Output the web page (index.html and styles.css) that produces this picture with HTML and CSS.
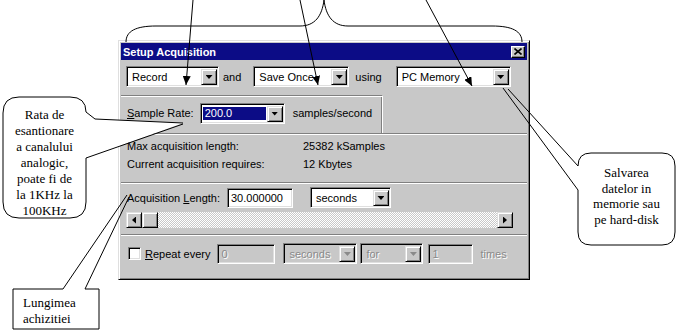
FILE: index.html
```html
<!DOCTYPE html>
<html lang="ro">
<head>
  <meta charset="UTF-8" />
  <title>Setup Acquisition</title>
  <link rel="stylesheet" href="styles.css">
</head>
<body>

  <div class="canvas">
    <div class="dialog">
      <div class="titlebar">
        <span class="title">Setup Acquisition</span>
        <span class="close-btn">
          <svg width="8" height="7" viewBox="0 0 8 7"><path d="M0.5 0.5 L7.5 6.5 M7.5 0.5 L0.5 6.5" stroke="#000" stroke-width="1.6" /></svg>
        </span>
      </div>

      <div class="mode-row">
        <div class="combo combo-record"><span class="combo-value">Record</span><span class="combo-btn"></span></div>
        <span class="word-and">and</span>
        <div class="combo combo-save"><span class="combo-value">Save Once</span><span class="combo-btn"></span></div>
        <span class="word-using">using</span>
        <div class="combo combo-memory"><span class="combo-value">PC Memory</span><span class="combo-btn"></span></div>
      </div>

      <div class="rate-group">
        <span class="rate-label"><u>S</u>ample Rate:</span>
        <div class="combo combo-rate"><span class="combo-value selected">200.0</span><span class="combo-btn"></span></div>
        <span class="rate-unit">samples/second</span>
      </div>
      <div class="sep"></div>

      <div class="info">
        <span>Max acquisition length:</span><span>25382 kSamples</span>
        <span>Current acquisition requires:</span><span>12 Kbytes</span>
      </div>
      <div class="sep sep-info"></div>

      <div class="length-row">
        <span class="length-label">Acquisition <u>L</u>ength:</span>
        <div class="field field-length">30.000000</div>
        <div class="combo combo-unit"><span class="combo-value">seconds</span><span class="combo-btn"></span></div>
      </div>

      <div class="scrollbar">
        <span class="sb-btn sb-left"></span>
        <span class="sb-thumb"></span>
        <span class="sb-track"></span>
        <span class="sb-btn sb-right"></span>
      </div>
      <div class="sep sep-scroll"></div>

      <div class="repeat-row">
        <span class="checkbox"></span>
        <span class="repeat-label"><u>R</u>epeat every</span>
        <div class="field field-every disabled">0</div>
        <div class="combo combo-every disabled"><span class="combo-value">seconds</span><span class="combo-btn"></span></div>
        <div class="combo combo-for disabled"><span class="combo-value">for</span><span class="combo-btn"></span></div>
        <div class="field field-times disabled">1</div>
        <span class="times-label">times</span>
      </div>
    </div>

    <div class="note note-rate">Rata de<br>esantionare<br>a canalului<br>analogic,<br>poate fi de<br>la 1KHz la<br>100KHz</div>
    <div class="note note-memory">Salvarea<br>datelor in<br>memorie sau<br>pe hard-disk</div>
    <div class="note note-length">Lungimea<br>achizitiei</div>

    <svg class="overlay" width="678" height="331" viewBox="0 0 678 331">
      <defs>
        <marker id="head" markerWidth="9" markerHeight="8" refX="9" refY="4" orient="auto" markerUnits="userSpaceOnUse">
          <path d="M0 0 L9 4 L0 8 Z" fill="#000" />
        </marker>
      </defs>
      <g fill="none" stroke="#000" stroke-width="1">
        <!-- acolada de sus -->
        <path d="M126 42 C126 31 136 26 156 26 L300 26 C315 26 322 16 324 0 C326 16 333 26 348 26 L492 26 C512 26 522 31 522 42" />
        <!-- sageti spre combobox-uri -->
        <path d="M193 0 L186 85" marker-end="url(#head)" />
        <path d="M300 0 L318 85" marker-end="url(#head)" />
        <path d="M426 0 L472 86" marker-end="url(#head)" />
        <!-- nota rata -->
        <path d="M86 158 L86 202 Q86 218 70 218 L19 218 Q3 218 3 202 L3 113 Q3 97 19 97 L70 97 Q86 97 86 112 L95 119 L183 123" fill="#fff" />
        <path d="M86 158 L183 124" />
        <!-- nota memorie -->
        <path d="M578 166 Q578 153 591 153 L662 153 Q675 153 675 166 L675 232 Q675 245 662 245 L591 245 Q578 245 578 232 L578 190" fill="#fff" />
        <path d="M578 166 L508 89" />
        <path d="M578 190 L503 88" />
        <!-- nota lungime -->
        <path d="M63 289 L13 289 L13 329 L99 329 L99 289 L85 289" fill="#fff" />
        <path d="M63 289 L127 195" />
        <path d="M85 289 L129 197" />
      </g>
    </svg>
  </div>

</body>
</html>
```

FILE: styles.css
```css
body {
  margin: 0;
  background-color: #fff;
  font-family: 'Liberation Sans', Arial, sans-serif;
  font-size: 11px;
  color: #000;
}

.canvas {
  position: relative;
  width: 678px;
  height: 331px;
  padding-top: 40px;
  box-sizing: border-box;
  overflow: hidden;
}

/* fereastra */
.dialog {
  margin-left: 118px;
  width: 412px;
  height: 240px;
  box-sizing: border-box;
  padding: 2px;
  background-color: #c8c8c8;
  border: 1px solid;
  border-color: #dfdfdf #000 #000 #dfdfdf;
  box-shadow: inset 1px 1px #fff, inset -1px -1px #808080;
}

.titlebar {
  height: 17px;
  display: flex;
  align-items: center;
  justify-content: space-between;
  padding: 0 2px;
  background-color: #0c0c86;
}

.title {
  color: #fff;
  font-weight: 700;
  font-size: 11px;
}

.close-btn {
  width: 14px;
  height: 12px;
  box-sizing: border-box;
  display: flex;
  align-items: center;
  justify-content: center;
  background-color: #c8c8c8;
  border: 1px solid;
  border-color: #fff #000 #000 #fff;
  box-shadow: inset -1px -1px #808080;
}

/* combobox */
.combo {
  height: 21px;
  box-sizing: border-box;
  display: flex;
  align-items: stretch;
  padding: 1px;
  background-color: #fff;
  border: 1px solid;
  border-color: #808080 #fff #fff #808080;
  box-shadow: inset 1px 1px #000, inset -1px -1px #dfdfdf;
}

.combo-value {
  flex: 1;
  display: flex;
  align-items: center;
  padding-left: 3px;
  margin: 1px 0 1px 1px;
  white-space: nowrap;
  overflow: hidden;
}

.combo-value.selected {
  background-color: #0c0c86;
  color: #fff;
  margin: 2px 1px 2px 1px;
  padding-left: 2px;
}

.combo-btn {
  width: 16px;
  margin: 1px 0 0;
  box-sizing: border-box;
  display: flex;
  align-items: center;
  justify-content: center;
  background-color: #c8c8c8;
  border: 1px solid;
  border-color: #dfdfdf #000 #000 #dfdfdf;
  box-shadow: inset 1px 1px #fff, inset -1px -1px #808080;
}

.combo-btn::after {
  content: "";
  width: 7px;
  height: 4px;
  background-color: #000;
  clip-path: polygon(0 0, 100% 0, 50% 100%);
}

.field {
  height: 20px;
  box-sizing: border-box;
  display: flex;
  align-items: center;
  padding-left: 3px;
  background-color: #fff;
  border: 1px solid;
  border-color: #808080 #fff #fff #808080;
  box-shadow: inset 1px 1px #000, inset -1px -1px #dfdfdf;
}

.disabled,
.disabled .combo-value {
  background-color: #c8c8c8;
  color: #8a8a8a;
  text-shadow: 1px 1px #fff;
}

.disabled .combo-btn::after {
  background-color: #8a8a8a;
}

/* rand 1 */
.mode-row {
  margin-top: 6px;
  padding-left: 5px;
  display: flex;
  align-items: center;
}

.combo-record { width: 93px; margin-right: 4px; }
.word-and { margin-right: 12px; }
.combo-save { width: 96px; margin-right: 6px; }
.word-using { margin-right: 14px; }
.combo-memory { width: 115px; }

/* rata de esantionare */
.rate-group {
  margin-top: 8px;
  width: 262px;
  height: 38px;
  box-sizing: border-box;
  padding: 0 0 3px 6px;
  display: flex;
  align-items: center;
  border-top: 1px solid #808080;
  border-right: 1px solid #fff;
  box-shadow: inset 0 1px #fff, inset -1px 0 #808080;
}

.combo-rate { width: 85px; margin: 0 8px 0 6px; }

.sep {
  border-top: 1px solid #808080;
  border-bottom: 1px solid #fff;
}

.info {
  padding: 2px 0 0 6px;
  display: grid;
  grid-template-columns: 176px auto;
  grid-auto-rows: 18px;
  align-items: center;
}

.sep-info { margin-top: 9px; }

/* lungime */
.length-row {
  margin-top: 3px;
  padding-left: 6px;
  display: flex;
  align-items: center;
}

.field-length { width: 66px; margin-left: 7px; }
.combo-unit { width: 81px; margin-left: 17px; }

/* bara de derulare */
.scrollbar {
  margin: 4px 0 0 5px;
  width: 387px;
  height: 16px;
  display: flex;
}

.sb-btn,
.sb-thumb {
  width: 16px;
  height: 16px;
  box-sizing: border-box;
  display: flex;
  align-items: center;
  justify-content: center;
  background-color: #c8c8c8;
  border: 1px solid;
  border-color: #dfdfdf #000 #000 #dfdfdf;
  box-shadow: inset 1px 1px #fff, inset -1px -1px #808080;
}

.sb-btn::after {
  content: "";
  width: 4px;
  height: 7px;
  background-color: #000;
}

.sb-left::after { clip-path: polygon(100% 0, 100% 100%, 0 50%); }
.sb-right::after { clip-path: polygon(0 0, 0 100%, 100% 50%); }

.sb-track {
  flex: 1;
  background: repeating-conic-gradient(#c8c8c8 0 25%, #fff 0 50%) 0 0 / 2px 2px;
}

.sep-scroll { margin-top: 6px; }

/* repetare */
.repeat-row {
  margin-top: 7px;
  padding-left: 7px;
  display: flex;
  align-items: center;
}

.checkbox {
  width: 13px;
  height: 13px;
  box-sizing: border-box;
  margin-right: 4px;
  background-color: #fff;
  border: 1px solid;
  border-color: #808080 #fff #fff #808080;
  box-shadow: inset 1px 1px #000, inset -1px -1px #dfdfdf;
}

.field-every { width: 58px; margin-left: 7px; }
.combo-every { width: 74px; margin-left: 8px; }
.combo-for { width: 63px; margin-left: 3px; }
.field-times { width: 45px; margin-left: 5px; }

.times-label {
  margin-left: 7px;
  color: #8a8a8a;
  text-shadow: 1px 1px #fff;
}

/* note explicative */
.overlay {
  position: absolute;
  top: 0;
  left: 0;
  pointer-events: none;
}

.note {
  position: absolute;
  z-index: 1;
  font-family: 'Liberation Serif', 'Times New Roman', serif;
  font-size: 13px;
  line-height: 16px;
}

.note-rate {
  left: 3px;
  top: 107px;
  width: 83px;
  text-align: center;
}

.note-memory {
  left: 578px;
  top: 165px;
  width: 97px;
  line-height: 15.5px;
  text-align: center;
}

.note-length {
  left: 23px;
  top: 295px;
}
```
